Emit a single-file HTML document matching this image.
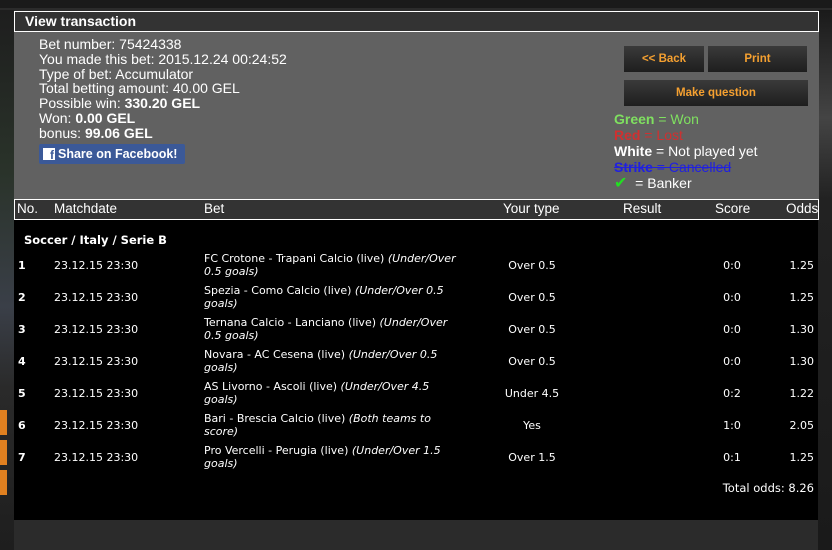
<!DOCTYPE html>
<html><head><style>
*{margin:0;padding:0;box-sizing:border-box}
body{width:832px;height:550px;background:#2b2b2b;font-family:"Liberation Sans","DejaVu Sans",sans-serif;color:#fff;position:relative;overflow:hidden}
.a{position:absolute;white-space:nowrap}
.info{font-size:14px;line-height:14.8px;color:#fff}
.btn{position:absolute;background:linear-gradient(#3a3a3a,#1e1e1e);color:#f5a030;font-weight:bold;font-size:11.5px;text-align:center;line-height:26px}
.row{font-family:"DejaVu Sans",sans-serif;font-size:11px}
.hd{font-size:13.5px;top:201px}
</style></head><body>
<div class="a" style="left:0;top:0;width:832px;height:8px;background:#1a1a1a"></div>
<div class="a" style="left:0;top:10px;width:14px;height:540px;background:linear-gradient(#1e1e1e,#2a332a 30%,#3a3f48 55%,#2a2a2a 70%,#1e1e1e)"></div>
<div class="a" style="left:0;top:410px;width:7px;height:25px;background:#e08020"></div>
<div class="a" style="left:0;top:440px;width:7px;height:25px;background:#e08020"></div>
<div class="a" style="left:0;top:470px;width:7px;height:25px;background:#e08020"></div>
<div class="a" style="left:818px;top:10px;width:14px;height:540px;background:linear-gradient(#1a1a1a,#444 20%,#222 35%,#1a1a1a)"></div>
<div class="a" style="left:14px;top:11px;width:805px;height:21px;background:#333;border:1px solid #fff"></div>
<div class="a" style="left:25px;top:13px;font-weight:bold;font-size:14px">View transaction</div>
<div class="a" style="left:14px;top:32px;width:805px;height:167px;background:#616161"></div>
<div class="a info" style="left:39px;top:37px">Bet number: 75424338<br>You made this bet: 2015.12.24 00:24:52<br>Type of bet: Accumulator<br>Total betting amount: 40.00 GEL<br>Possible win: <b>330.20 GEL</b><br>Won: <b>0.00 GEL</b><br>bonus: <b>99.06 GEL</b></div>
<div class="a" style="left:39px;top:144px;width:146px;height:20px;background:#3b5998;border-radius:2px;font-weight:bold;font-size:12.5px;line-height:20px;padding-left:19px">Share on Facebook!</div>
<div class="a" style="left:43px;top:148px;width:12px;height:12px;background:#fff;color:#3b5998;font-weight:bold;font-size:12px;line-height:14px;text-align:right;padding-right:1px">f</div>
<div class="btn" style="left:624px;top:46px;width:80px;height:26px">&lt;&lt; Back</div>
<div class="btn" style="left:708px;top:46px;width:99px;height:26px">Print</div>
<div class="btn" style="left:624px;top:80px;width:184px;height:26px">Make question</div>
<div class="a" style="left:614px;top:111px;font-size:14px;line-height:16px">
<span style="color:#7fe060"><b>Green</b> = Won</span><br>
<span style="color:#d03030"><b>Red</b> = Lost</span><br>
<span><b>White</b> = Not played yet</span><br>
<span style="color:#2020e0;text-decoration:line-through"><b>Strike</b> = Cancelled</span><br>
<span><span style="color:#22dd22;font-weight:bold;font-size:16px">✔</span>&nbsp; = Banker</span></div>
<div class="a" style="left:14px;top:199px;width:805px;height:21px;background:#333;border:1px solid #fff"></div>
<div class="a hd" style="left:17px">No.</div>
<div class="a hd" style="left:54px">Matchdate</div>
<div class="a hd" style="left:204px">Bet</div>
<div class="a hd" style="left:503px">Your type</div>
<div class="a hd" style="left:623px">Result</div>
<div class="a hd" style="left:715px">Score</div>
<div class="a hd" style="left:786px">Odds</div>
<div class="a" style="left:14px;top:220px;width:804px;height:300px;background:#000"></div>
<div class="a" style="left:24px;top:233px;font-weight:bold;font-size:12.5px;font-family:'DejaVu Sans',sans-serif;font-size:11.5px">Soccer / Italy / Serie B</div>
<div id="rows"></div>
<div class="a row" style="left:690px;width:124px;text-align:right;top:481px;font-size:11.5px">Total odds: 8.26</div>
<script>
var d=[["1","FC Crotone - Trapani Calcio (live) ","(Under/Over","0.5 goals)","Over 0.5","0:0","1.25"],
["2","Spezia - Como Calcio (live) ","(Under/Over 0.5","goals)","Over 0.5","0:0","1.25"],
["3","Ternana Calcio - Lanciano (live) ","(Under/Over","0.5 goals)","Over 0.5","0:0","1.30"],
["4","Novara - AC Cesena (live) ","(Under/Over 0.5","goals)","Over 0.5","0:0","1.30"],
["5","AS Livorno - Ascoli (live) ","(Under/Over 4.5","goals)","Under 4.5","0:2","1.22"],
["6","Bari - Brescia Calcio (live) ","(Both teams to","score)","Yes","1:0","2.05"],
["7","Pro Vercelli - Perugia (live) ","(Under/Over 1.5","goals)","Over 1.5","0:1","1.25"]];
var h="";d.forEach(function(r,i){var y=258+i*32;
h+='<div class="a row" style="left:18px;font-weight:bold;line-height:14px;top:'+(y+1)+'px">'+r[0]+'</div>';
h+='<div class="a row" style="left:54px;top:'+(y+1)+'px;line-height:14px">23.12.15 23:30</div>';
h+='<div class="a row" style="left:204px;top:'+(y-6)+'px;line-height:13px">'+r[1]+'<i>'+r[2]+'</i><br><i>'+r[3]+'</i></div>';
h+='<div class="a row" style="left:472px;width:120px;text-align:center;top:'+(y+1)+'px;line-height:14px">'+r[4]+'</div>';
h+='<div class="a row" style="left:712px;width:40px;text-align:center;top:'+(y+1)+'px;line-height:14px">'+r[5]+'</div>';
h+='<div class="a row" style="left:770px;width:44px;text-align:right;top:'+(y+1)+'px;line-height:14px">'+r[6]+'</div>';});
document.getElementById("rows").innerHTML=h;
</script>
</body></html>
